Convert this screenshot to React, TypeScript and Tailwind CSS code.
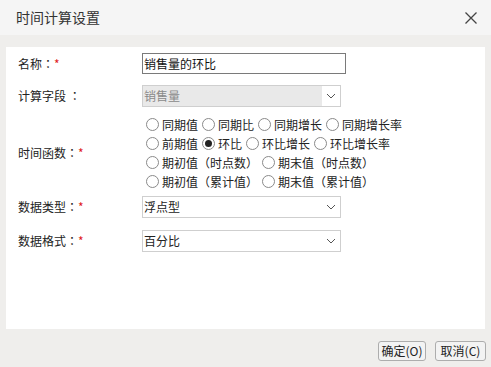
import React from "react";

const FONT = { fontFamily: '"Noto Sans CJK SC", "Microsoft YaHei", sans-serif' };
const TC = { fontFamily: '"Noto Sans CJK TC", sans-serif' };

function Chevron() {
  return (
    <svg width="10" height="6" viewBox="0 0 10 6" className="shrink-0">
      <polyline points="1,1 5,5 9,1" fill="none" stroke="#555" strokeWidth="1" />
    </svg>
  );
}

function Radio({ label, checked }: { label: string; checked?: boolean }) {
  return (
    <span className="inline-flex items-center mr-[4px]">
      <span className="w-[13px] h-[13px] rounded-full border border-[#8a8a8a] bg-white flex items-center justify-center mr-[3px]">
        {checked && <span className="w-[7px] h-[7px] rounded-full bg-[#222]" />}
      </span>
      <span style={TC}>{label}</span>
    </span>
  );
}

function Label({ text, required }: { text: string; required?: boolean }) {
  return (
    <div className="w-[124px] shrink-0 text-[12px] text-[#222]">
      {text}
      <span style={TC}>：</span>
      {required && <span className="text-[#e02020]">*</span>}
    </div>
  );
}

function Select({ value, disabled }: { value: string; disabled?: boolean }) {
  return (
    <div
      className={`w-[199px] h-[22px] flex items-center border ${
        disabled ? "border-[#cfcfcf] bg-[#e9e9e9] text-[#8a8a8a]" : "border-[#cfcfcf] bg-white text-[#222]"
      }`}
    >
      <span className="flex-1 pl-[1px] text-[12px]">{value}</span>
      <span className="w-[18px] h-full flex items-center justify-center bg-white">
        <Chevron />
      </span>
    </div>
  );
}

export default function App() {
  return (
    <div className="w-[491px] h-[367px] bg-[#efeeec] flex flex-col" style={FONT}>
      <div className="h-[35px] bg-[#f5f5f5] flex items-center justify-between pl-[16px] pr-[13px]">
        <span className="text-[14px] text-[#333]">时间计算设置</span>
        <svg width="14" height="14" viewBox="0 0 14 14">
          <path d="M1.5 1.5 L12.5 12.5 M12.5 1.5 L1.5 12.5" stroke="#444" strokeWidth="1.3" fill="none" />
        </svg>
      </div>

      <div className="mx-[6px] mt-[12px] h-[282px] bg-white pl-[12px] pt-[6px] flex flex-col">
        <div className="flex items-center h-[21px]">
          <Label text="名称" required />
          <div className="w-[204px] h-[21px] border border-[#7a7a7a] flex items-center pl-[1px] text-[12px] text-[#111]">
            销售量的环比
          </div>
        </div>

        <div className="flex items-center mt-[11px]">
          <Label text="计算字段 " />
          <Select value="销售量" disabled />
        </div>

        <div className="flex items-center mt-[8px]">
          <Label text="时间函数" required />
          <div className="flex flex-col text-[12px] text-[#222] ml-[4px]">
            <div className="h-[19px] flex items-center">
              <Radio label="同期值" />
              <Radio label="同期比" />
              <Radio label="同期增长" />
              <Radio label="同期增长率" />
            </div>
            <div className="h-[19px] flex items-center">
              <Radio label="前期值" />
              <Radio label="环比" checked />
              <Radio label="环比增长" />
              <Radio label="环比增长率" />
            </div>
            <div className="h-[19px] flex items-center">
              <Radio label="期初值（时点数）" />
              <Radio label="期末值（时点数）" />
            </div>
            <div className="h-[19px] flex items-center">
              <Radio label="期初值（累计值）" />
              <Radio label="期末值（累计值）" />
            </div>
          </div>
        </div>

        <div className="flex items-center mt-[5px]">
          <Label text="数据类型" required />
          <Select value="浮点型" />
        </div>

        <div className="flex items-center mt-[12px]">
          <Label text="数据格式" required />
          <Select value="百分比" />
        </div>
      </div>

      <div className="flex justify-end gap-[9px] pr-[5px] mt-[12px]">
        <button className="w-[48px] h-[20px] rounded-[3px] border border-[#adadad] bg-[#f3f3f3] text-[12px] text-[#222] flex items-center justify-center">
          确定(O)
        </button>
        <button className="w-[51px] h-[20px] rounded-[3px] border border-[#adadad] bg-[#f3f3f3] text-[12px] text-[#222] flex items-center justify-center">
          取消(C)
        </button>
      </div>
    </div>
  );
}
